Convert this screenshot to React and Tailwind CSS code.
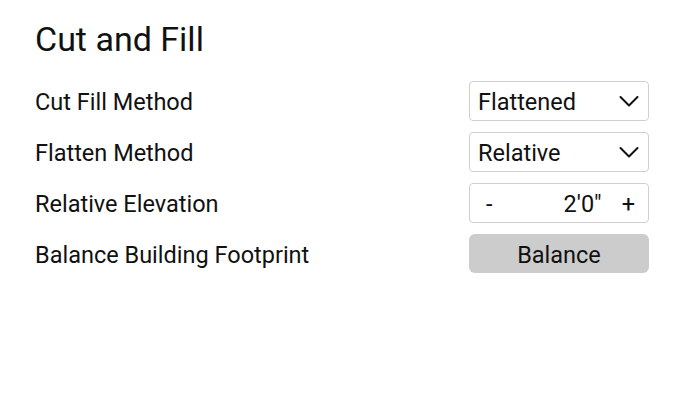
import React, { useState } from "react";

/* Cut and Fill settings panel */

function Chevron() {
  return (
    <svg width="24" height="24" viewBox="0 0 24 24" fill="none" stroke="#111" strokeWidth="2" strokeLinecap="round" strokeLinejoin="round">
      <path d="M3.5 8l8.5 8.5 8.5-8.5" />
    </svg>
  );
}

function Select({ value }) {
  return (
    <div className="flex h-[40px] w-[180px] items-center justify-between rounded-[4px] border border-[#cfcfcf] bg-white pl-[8px] pr-[7px]">
      <span className="pt-[2px]">{value}</span>
      <Chevron />
    </div>
  );
}

export default function App() {
  const [elev] = useState("2'0\"");

  const rows = [
    { label: "Cut Fill Method", control: <Select value="Flattened" /> },
    { label: "Flatten Method", control: <Select value="Relative" /> },
    {
      label: "Relative Elevation",
      control: (
        <div className="flex h-[40px] w-[180px] items-center rounded-[4px] border border-[#cfcfcf] bg-white pl-[16px] pr-[13px] pt-[2px]">
          <span className="w-[20px]">-</span>
          <span className="flex-1 pr-[20px] text-right">{elev}</span>
          <span>+</span>
        </div>
      ),
    },
    {
      label: "Balance Building Footprint",
      control: (
        <button className="h-[39px] w-[180px] rounded-[6px] bg-[#cccccc] pt-[2px] text-center">
          Balance
        </button>
      ),
    },
  ];

  return (
    <div className="h-[406px] w-[688px] bg-white text-[#111] font-['Roboto',sans-serif] text-[23.5px]">
      <div className="pl-[35px] pr-[39px] pt-[19px]">
        <h1 className="text-[34px] leading-[40px]">Cut and Fill</h1>
        <div className="mt-[22px] flex flex-col gap-[11px]">
          {rows.map((r) => (
            <div key={r.label} className="flex items-center justify-between leading-[28px]">
              <span className="pt-[2px]">{r.label}</span>
              {r.control}
            </div>
          ))}
        </div>
      </div>
    </div>
  );
}
